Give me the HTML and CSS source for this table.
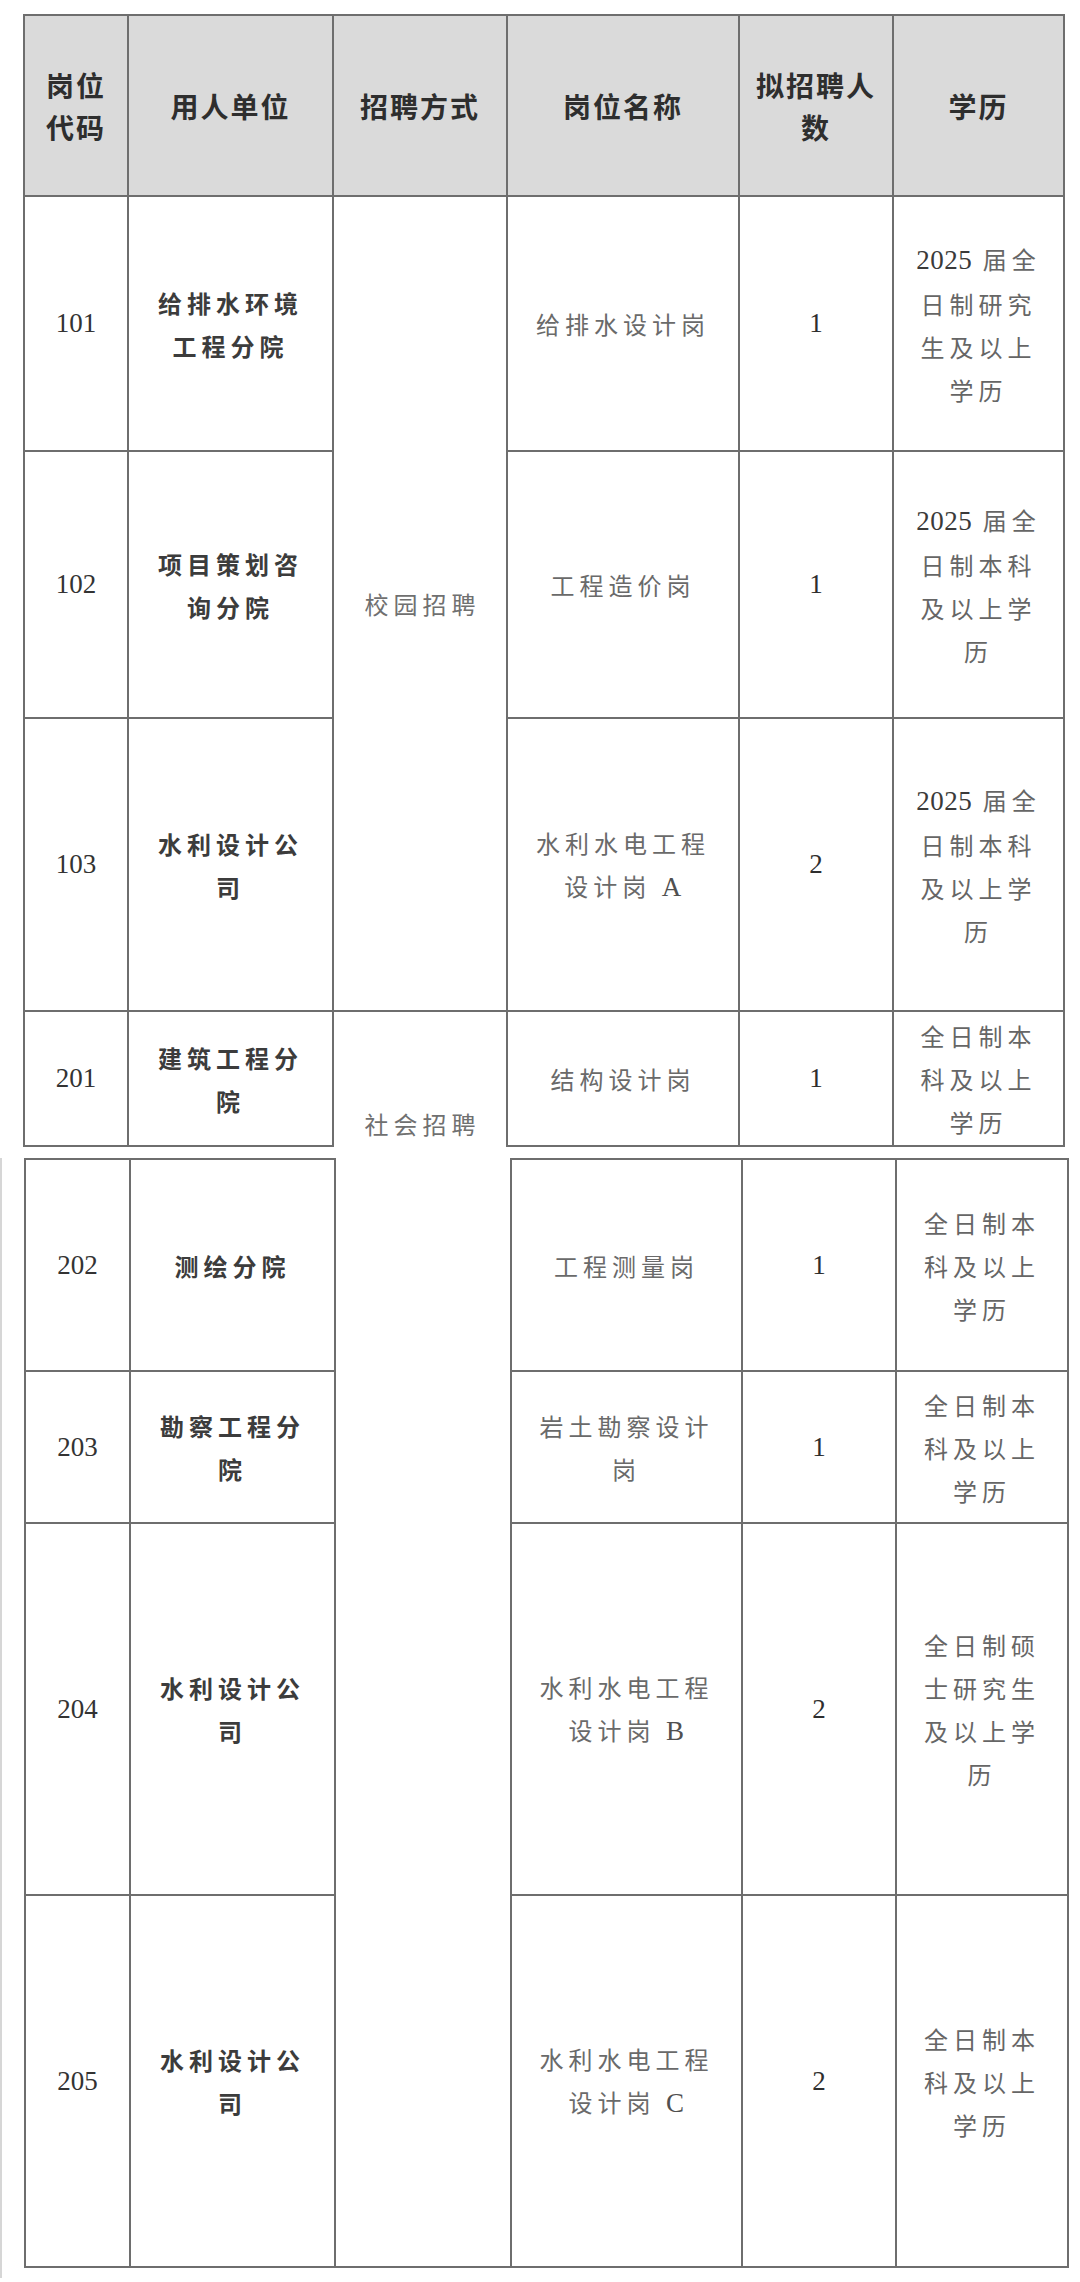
FILE: index.html
```html
<!DOCTYPE html>
<html lang="zh-CN">
<head>
<meta charset="utf-8">
<title>岗位表</title>
<link rel="stylesheet" href="styles.css">
</head>
<body>
<div class="page">
  <table class="grid grid-a">
    <colgroup>
      <col class="c-code"><col class="c-unit"><col class="c-way"><col class="c-name"><col class="c-num"><col class="c-edu">
    </colgroup>
    <tr class="head">
      <th>岗位<br>代码</th>
      <th>用人单位</th>
      <th>招聘方式</th>
      <th>岗位名称</th>
      <th>拟招聘人<br>数</th>
      <th>学历</th>
    </tr>
    <tr class="r101">
      <td class="code">101</td>
      <td class="unit">给排水环境<br>工程分院</td>
      <td class="way" rowspan="3">校园招聘</td>
      <td class="name">给排水设计岗</td>
      <td class="num">1</td>
      <td class="edu"><span class="lat">2025</span> 届全<br>日制研究<br>生及以上<br>学历</td>
    </tr>
    <tr class="r102">
      <td class="code">102</td>
      <td class="unit">项目策划咨<br>询分院</td>
      <td class="name">工程造价岗</td>
      <td class="num">1</td>
      <td class="edu"><span class="lat">2025</span> 届全<br>日制本科<br>及以上学<br>历</td>
    </tr>
    <tr class="r103">
      <td class="code">103</td>
      <td class="unit">水利设计公<br>司</td>
      <td class="name">水利水电工程<br>设计岗 <span class="lat">A</span></td>
      <td class="num">2</td>
      <td class="edu"><span class="lat">2025</span> 届全<br>日制本科<br>及以上学<br>历</td>
    </tr>
    <tr class="r201">
      <td class="code">201</td>
      <td class="unit">建筑工程分<br>院</td>
      <td class="way way-open-bottom">社会招聘</td>
      <td class="name">结构设计岗</td>
      <td class="num">1</td>
      <td class="edu">全日制本<br>科及以上<br>学历</td>
    </tr>
  </table>

  <div class="second">
    <table class="grid grid-b">
      <colgroup>
        <col class="d-code"><col class="d-unit"><col class="d-way"><col class="d-name"><col class="d-num"><col class="d-edu">
      </colgroup>
      <tr class="r202">
        <td class="code">202</td>
        <td class="unit">测绘分院</td>
        <td class="way way-open-top" rowspan="4"></td>
        <td class="name">工程测量岗</td>
        <td class="num">1</td>
        <td class="edu">全日制本<br>科及以上<br>学历</td>
      </tr>
      <tr class="r203">
        <td class="code">203</td>
        <td class="unit">勘察工程分<br>院</td>
        <td class="name">岩土勘察设计<br>岗</td>
        <td class="num">1</td>
        <td class="edu">全日制本<br>科及以上<br>学历</td>
      </tr>
      <tr class="r204">
        <td class="code">204</td>
        <td class="unit">水利设计公<br>司</td>
        <td class="name">水利水电工程<br>设计岗 <span class="lat">B</span></td>
        <td class="num">2</td>
        <td class="edu">全日制硕<br>士研究生<br>及以上学<br>历</td>
      </tr>
      <tr class="r205">
        <td class="code">205</td>
        <td class="unit">水利设计公<br>司</td>
        <td class="name">水利水电工程<br>设计岗 <span class="lat">C</span></td>
        <td class="num">2</td>
        <td class="edu">全日制本<br>科及以上<br>学历</td>
      </tr>
    </table>
  </div>
</div>
</body>
</html>
```

FILE: styles.css
```css
html, body {
  margin: 0;
  padding: 0;
  background: #ffffff;
}

body {
  font-family: "Liberation Serif", "Noto Sans CJK SC", serif;
  color: #333333;
}

.page {
  padding-top: 14px;
}

.grid {
  border-collapse: collapse;
  table-layout: fixed;
}

.grid th,
.grid td {
  border: 2px solid #6e6e6e;
  padding: 0;
  text-align: center;
  vertical-align: middle;
  white-space: nowrap;
  line-height: 43px;
}

.grid-a {
  margin-left: 23px;
  width: 1040px;
}

.c-code { width: 104px; }
.c-unit { width: 205px; }
.c-way  { width: 174px; }
.c-name { width: 232px; }
.c-num  { width: 154px; }
.c-edu  { width: 171px; }

.second {
  margin-top: 11px;
  border-left: 2px solid #d6d6d6;
  padding-left: 22px;
  padding-bottom: 10px;
}

.grid-b {
  width: 1043px;
}

.d-code { width: 105px; }
.d-unit { width: 205px; }
.d-way  { width: 176px; }
.d-name { width: 231px; }
.d-num  { width: 154px; }
.d-edu  { width: 172px; }

.head {
  height: 181px;
  background: #dadada;
}

.head th {
  font-family: "Noto Sans CJK SC", sans-serif;
  font-weight: 700;
  font-size: 28px;
  letter-spacing: 2px;
  color: #2e2e2e;
  line-height: 42px;
}

.r101 { height: 255px; }
.r102 { height: 267px; }
.r103 { height: 293px; }
.r201 { height: 135px; }
.r202 { height: 212px; }
.r203 { height: 152px; }
.r204 { height: 372px; }
.r205 { height: 372px; }

.code {
  font-size: 27px;
  color: #333333;
}

.num {
  font-size: 27px;
  color: #2e2e2e;
}

.unit {
  font-family: "Noto Sans CJK SC", sans-serif;
  font-weight: 700;
  font-size: 24px;
  letter-spacing: 5px;
  color: #3c3c3c;
  padding-left: 5px;
}

.grid .way {
  font-family: "Noto Sans CJK SC", sans-serif;
  font-size: 24px;
  letter-spacing: 5px;
  color: #707070;
  padding-left: 5px;
}

.grid .way-open-bottom {
  border-bottom: none;
  vertical-align: bottom;
  padding-bottom: 1px;
}

.grid .way-open-top {
  border-top: none;
}

.name {
  font-family: "Noto Sans CJK SC", sans-serif;
  font-size: 24px;
  letter-spacing: 5px;
  color: #6a6a6a;
  padding-left: 5px;
}

.edu {
  font-family: "Noto Sans CJK SC", sans-serif;
  font-size: 24px;
  letter-spacing: 5px;
  color: #666666;
  padding-left: 5px;
}

.lat {
  font-family: "Liberation Serif", serif;
  font-size: 27px;
  letter-spacing: 0.5px;
  color: #505050;
}

.edu .lat {
  color: #3a3a3a;
}
```
